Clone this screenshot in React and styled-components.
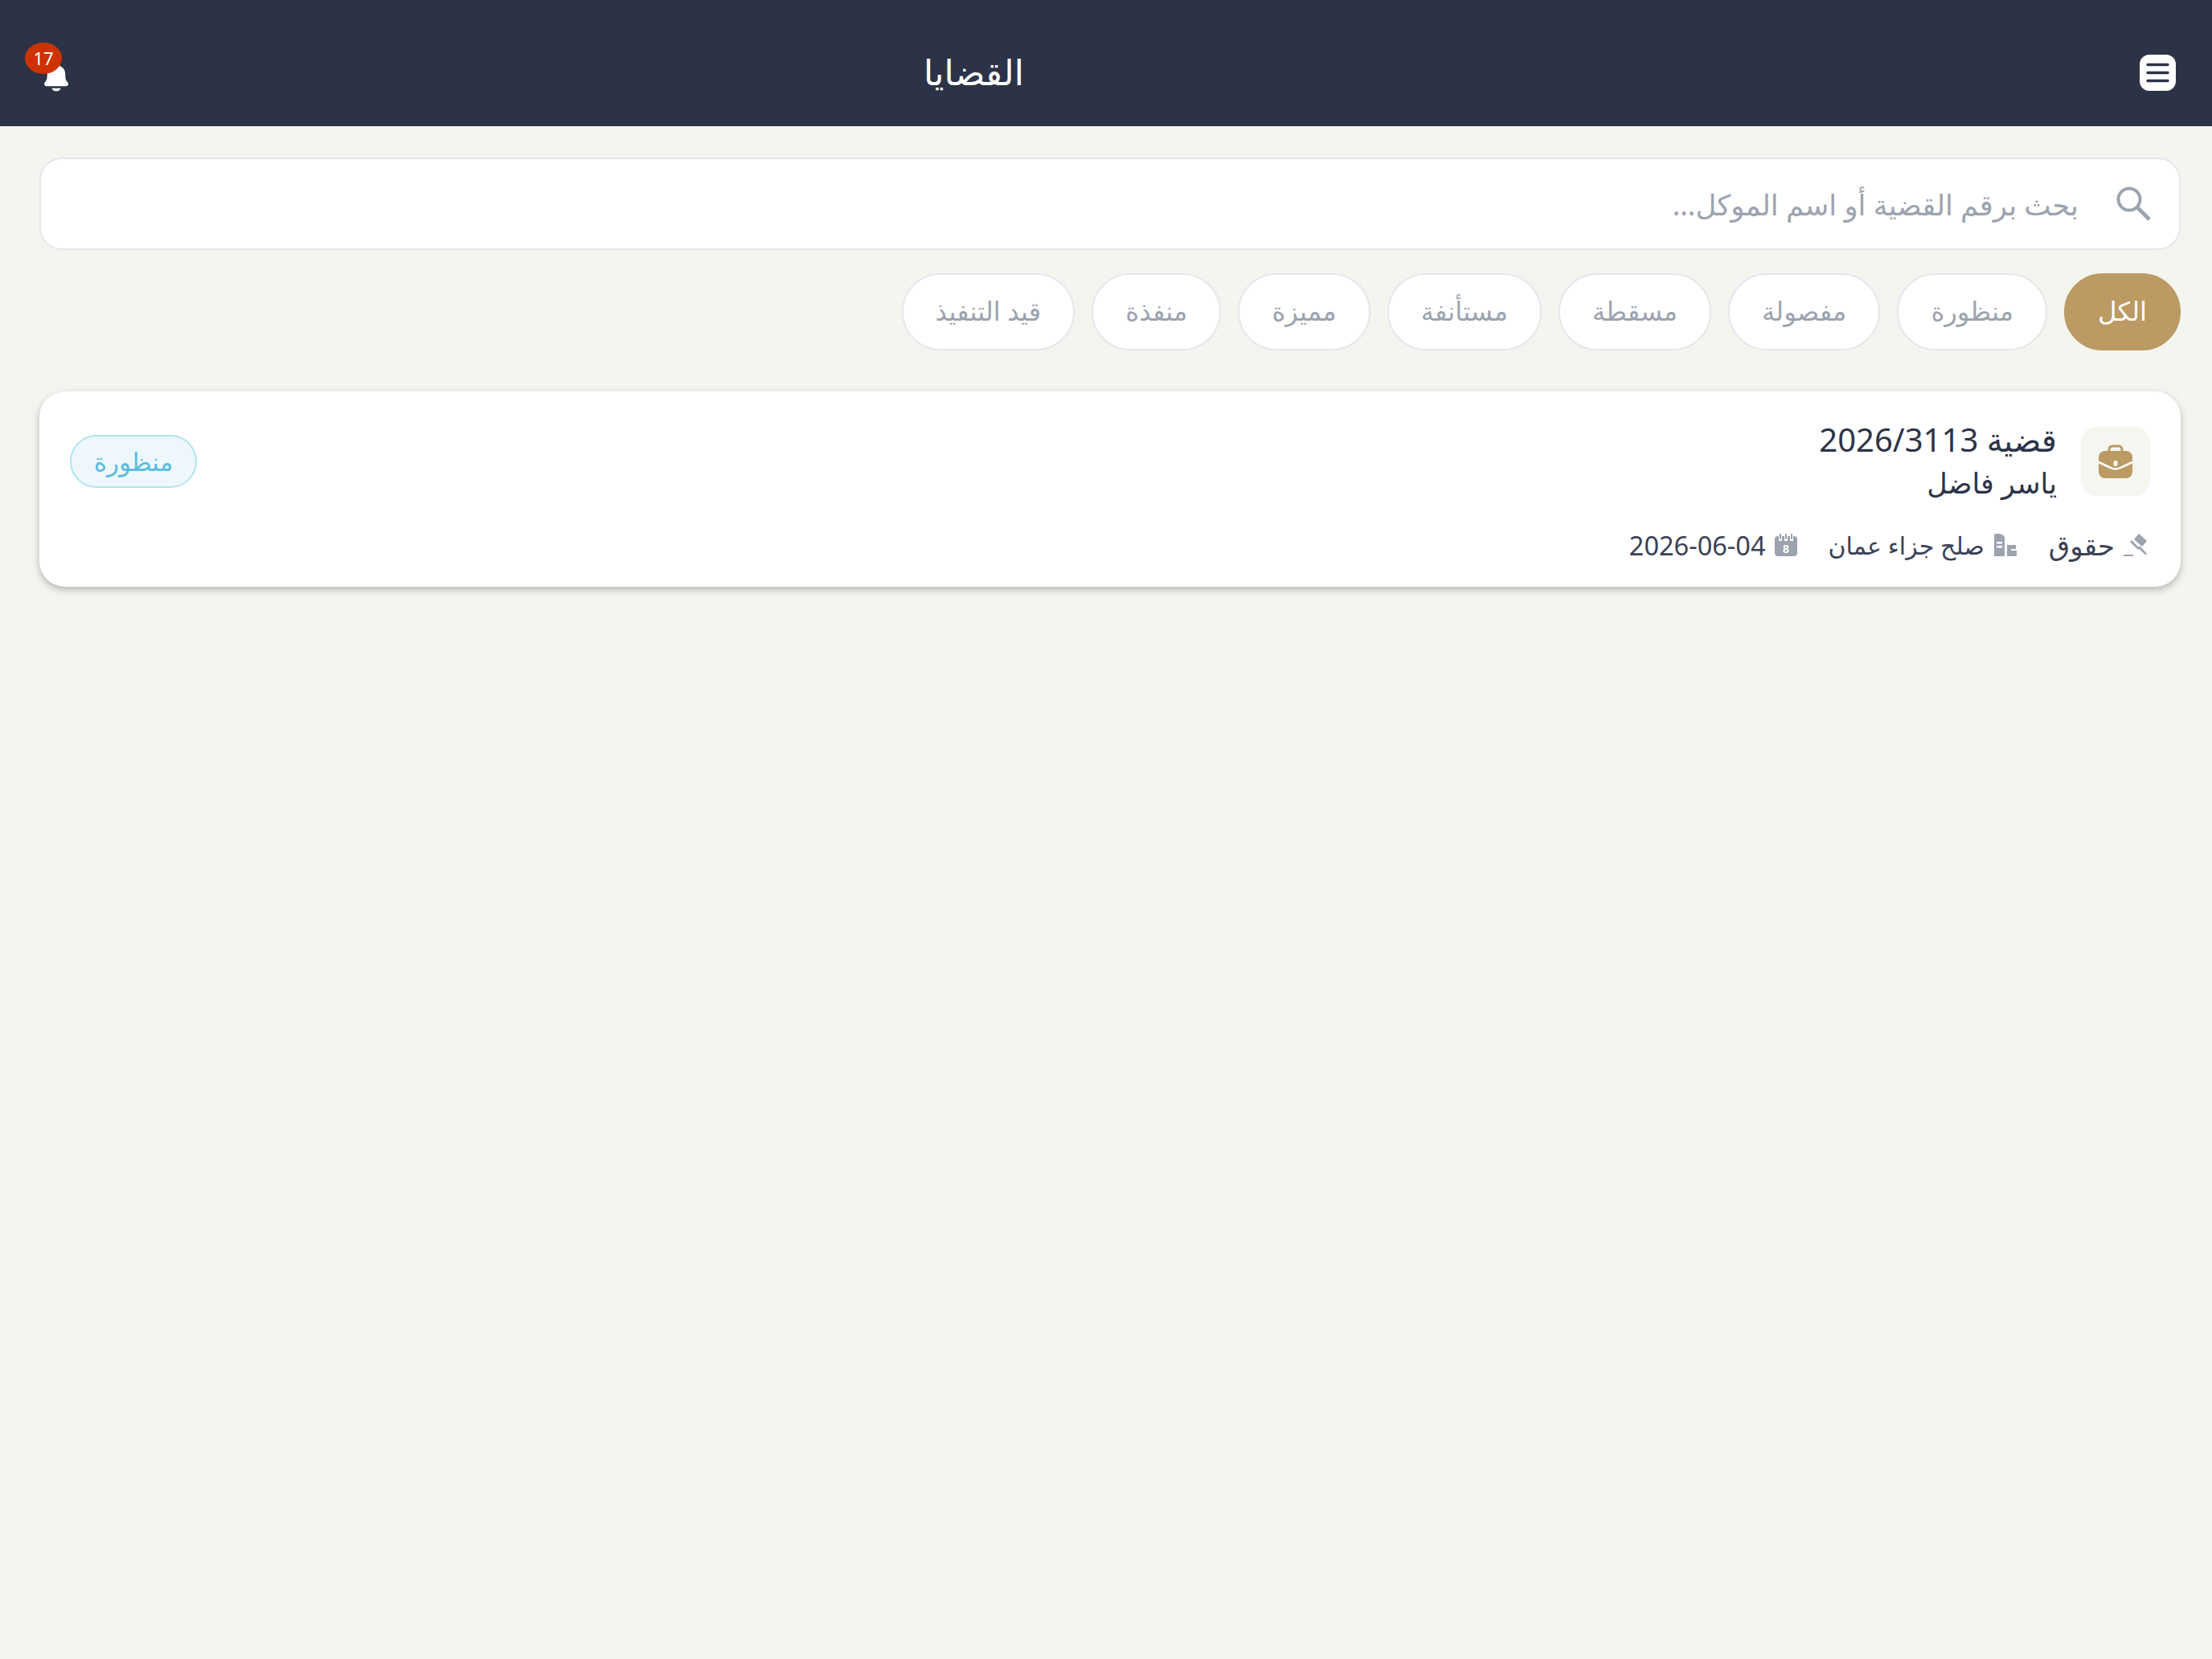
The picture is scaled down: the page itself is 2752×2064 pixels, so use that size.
import React from 'react';
import styled, { createGlobalStyle } from 'styled-components';
import { IoNotifications } from 'react-icons/io5';

const filters = ['الكل', 'منظورة', 'مفصولة', 'مسقطة', 'مستأنفة', 'مميزة', 'منفذة', 'قيد التنفيذ'];

function MenuIcon() {
  return (
    <svg width="45" height="45" viewBox="0 0 45 45">
      <rect width="45" height="45" rx="12" fill="#fff" />
      <path d="M10 12.5h25M10 22.5h25M10 32.5h25" stroke="#2d3347" strokeWidth="3.4" strokeLinecap="round" />
    </svg>
  );
}

function SearchIcon() {
  return (
    <svg width="44" height="44" viewBox="0 0 44 44" fill="none" stroke="#9ca3af">
      <circle cx="16" cy="16" r="13.500" strokeWidth="4" />
      <path d="M25.500 25.500L41 41" strokeWidth="5" />
    </svg>
  );
}

function BriefcaseIcon() {
  return (
    <svg width="42" height="42" viewBox="0 0 42 42">
      <path d="M13 10V6a4 4 0 0 1 4-4h8a4 4 0 0 1 4 4v4" fill="none" stroke="#bb9a63" strokeWidth="3" />
      <rect x="0" y="8" width="42" height="34" rx="8" fill="#bb9a63" />
      <path d="M0 22l15 7q6 3 12 0l15-7" fill="none" stroke="#fff" strokeWidth="2.500" />
      <rect x="18.500" y="20" width="5" height="7" rx="2.500" fill="#fff" />
    </svg>
  );
}

function GavelIcon() {
  return (
    <svg width="30" height="30" viewBox="0 0 30 30" fill="#9ca3af">
      <path d="M13 8l6-7 10 9-6 7z" />
      <path d="M8 11l2-2 10 10-2 2z" />
      <path d="M20 16l9 10-1.500 1.500-10-9z" />
      <rect x="0" y="27" width="12" height="2" />
    </svg>
  );
}

function CourtIcon() {
  return (
    <svg width="30" height="30" viewBox="0 0 30 30" fill="#9ca3af">
      <path d="M1 3q0-2 2-2l5 0q6 2 6 5v23H1z" />
      <rect x="4" y="11" width="7" height="2.500" fill="#fff" />
      <rect x="4" y="16" width="7" height="2.500" fill="#fff" />
      <path d="M17 15h11v5h-6v2h7v7H17z" />
    </svg>
  );
}

function CalendarIcon() {
  return (
    <svg width="28" height="28" viewBox="0 0 28 28">
      <path d="M4 3h20a4 4 0 0 1 4 4v17a4 4 0 0 1-4 4H4a4 4 0 0 1-4-4V7a4 4 0 0 1 4-4z" fill="#9ca3af" />
      <path d="M7 0v9M14 0v9M21 0v9" stroke="#fff" strokeWidth="4" />
      <path d="M7 0v6M14 0v6M21 0v6" stroke="#9ca3af" strokeWidth="2" strokeLinecap="round" />
      <text x="14" y="24" fontSize="14" fontWeight="700" textAnchor="middle" fill="#fff" fontFamily="Liberation Sans">8</text>
    </svg>
  );
}

export default function App() {
  return (
    <Page dir="rtl">
      <GlobalStyle />
      <Header>
        <MenuButton><MenuIcon /></MenuButton>
        <Title>القضايا</Title>
        <Bell>
          <IoNotifications size={40} color="#fff" />
          <Badge>17</Badge>
        </Bell>
      </Header>
      <Content>
        <SearchBar>
          <SearchIcon />
          <SearchInput placeholder="بحث برقم القضية أو اسم الموكل..." />
        </SearchBar>
        <Filters>
          {filters.map((name, i) => (
            <Chip key={name} $active={i === 0}>{name}</Chip>
          ))}
        </Filters>
        <Card>
          <CardTop>
            <IconBox><BriefcaseIcon /></IconBox>
            <CaseInfo>
              <CaseNumber>قضية 2026/3113</CaseNumber>
              <ClientName>ياسر فاضل</ClientName>
            </CaseInfo>
            <StatusTag>منظورة</StatusTag>
          </CardTop>
          <MetaRow>
            <MetaItem $size={34}><GavelIcon />حقوق</MetaItem>
            <MetaItem $size={30}><CourtIcon />صلح جزاء عمان</MetaItem>
            <MetaItem $size={32.5}><CalendarIcon />2026-06-04</MetaItem>
          </MetaRow>
        </Card>
      </Content>
    </Page>
  );
}

const GlobalStyle = createGlobalStyle`
  html, body {
    margin: 0;
    padding: 0;
    background: #f4f5ef;
  }
  * {
    box-sizing: border-box;
  }
`;

const Page = styled.div`
  width: 2752px;
  height: 2064px;
  background: #f4f5ef;
  font-family: "Noto Sans", "DejaVu Sans", sans-serif;
  color: #2d3347;
`;

const Header = styled.header`
  height: 157px;
  background: #2d3347;
  display: flex;
  align-items: center;
  padding: 24px 45px 0 50px;
`;

const MenuButton = styled.div`
  display: flex;
`;

const Title = styled.h1`
  margin: -3px 1388px 0 0;
  font-size: 44px;
  font-weight: 400;
  color: #fff;
`;

const Bell = styled.div`
  position: relative;
  margin-right: auto;
  margin-top: 10px;
  display: flex;
`;

const Badge = styled.span`
  position: absolute;
  top: -23px;
  left: -19px;
  width: 46px;
  height: 39px;
  border-radius: 50%;
  background: #cc3300;
  color: #fff;
  font-size: 22px;
  display: flex;
  align-items: center;
  justify-content: center;
`;

const Content = styled.main`
  padding: 39px 39px 0 49px;
`;

const SearchBar = styled.div`
  height: 115px;
  background: #fff;
  border: 2px solid #e5e7eb;
  border-radius: 28px;
  display: flex;
  align-items: center;
  gap: 45px;
  padding: 0 34px;
`;

const SearchInput = styled.input`
  flex: 1;
  border: none;
  outline: none;
  background: none;
  font: inherit;
  font-size: 35.500px;
  color: #2d3347;

  &::placeholder {
    color: #9ca3af;
    opacity: 1;
  }
`;

const Filters = styled.div`
  display: flex;
  gap: 21px;
  margin-top: 29px;
`;

const Chip = styled.button`
  height: 96px;
  padding: 0 40px 4px;
  border-radius: 48px;
  border: 2px solid ${(p) => (p.$active ? '#bb9a63' : '#e5e7eb')};
  background: ${(p) => (p.$active ? '#bb9a63' : '#fff')};
  color: ${(p) => (p.$active ? '#fff' : '#9ca3af')};
  font: inherit;
  font-size: 32.250px;
`;

const Card = styled.section`
  margin-top: 51px;
  height: 243px;
  background: #fff;
  border-radius: 32px;
  box-shadow: 0 4px 10px rgba(0, 0, 0, 0.25);
  padding: 33px 38px 0 38px;
`;

const CardTop = styled.div`
  display: flex;
  align-items: center;
  gap: 30px;
`;

const IconBox = styled.div`
  width: 86px;
  height: 86px;
  border-radius: 20px;
  background: #f7f5f0;
  display: flex;
  align-items: center;
  justify-content: center;
`;

const CaseInfo = styled.div`
  display: flex;
  flex-direction: column;
`;

const CaseNumber = styled.div`
  font-size: 40px;
  line-height: 54px;
`;

const ClientName = styled.div`
  font-size: 35px;
  line-height: 54px;
`;

const StatusTag = styled.span`
  margin-right: auto;
  height: 66px;
  width: 158px;
  border-radius: 33px;
  border: 2px solid #b0e4f2;
  background: #eef8fc;
  color: #5bbcdd;
  font-size: 31px;
  display: flex;
  align-items: center;
  justify-content: center;
`;

const MetaRow = styled.div`
  display: flex;
  align-items: center;
  gap: 39px;
  height: 46px;
  margin-top: 27px;
  padding-right: 3px;
  color: #3a4156;
`;

const MetaItem = styled.div`
  display: flex;
  align-items: center;
  gap: 11px;
  font-size: ${(p) => p.$size}px;
`;
